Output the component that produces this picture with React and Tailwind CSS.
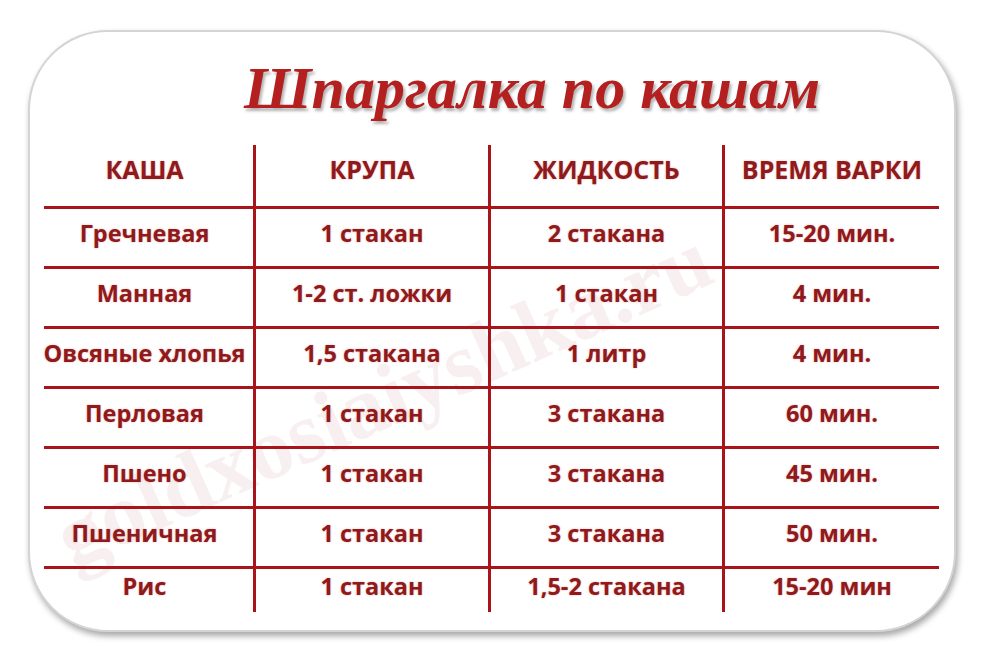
import React from 'react';

const rows = [
  ['Гречневая', '1 стакан', '2 стакана', '15-20 мин.'],
  ['Манная', '1-2 ст. ложки', '1 стакан', '4 мин.'],
  ['Овсяные хлопья', '1,5 стакана', '1 литр', '4 мин.'],
  ['Перловая', '1 стакан', '3 стакана', '60 мин.'],
  ['Пшено', '1 стакан', '3 стакана', '45 мин.'],
  ['Пшеничная', '1 стакан', '3 стакана', '50 мин.'],
  ['Рис', '1 стакан', '1,5-2 стакана', '15-20 мин'],
];

const headers = ['КАША', 'КРУПА', 'ЖИДКОСТЬ', 'ВРЕМЯ ВАРКИ'];
const widths = ['w-[212px]', 'w-[235px]', 'w-[234px]', 'w-[214px]'];

const Cell = ({ i, children, head }) => (
  <div
    className={`${widths[i]} shrink-0 flex items-center justify-center whitespace-nowrap ${
      i < 3 ? 'border-r-[3px] border-[#a8141a]' : ''
    } ${i === 0 ? 'pr-[8px]' : ''} ${head ? 'text-[25px] pb-[12px]' : 'text-[23.5px] pb-[8px]'}`}
  >
    <span className="[text-shadow:0_0_2px_rgba(220,60,60,0.45)]">{children}</span>
  </div>
);

export default function App() {
  return (
    <div className="w-[1000px] h-[650px] bg-white relative overflow-hidden">
      <div className="absolute left-[28px] top-[30px] w-[928px] h-[602px] rounded-[80px] border-2 border-[#d4d4d4] bg-white shadow-[2px_4px_6px_rgba(0,0,0,0.35)] overflow-hidden">
        {/* watermark */}
        <div className="absolute left-[0px] top-[300px] -rotate-[24deg] text-[88px] font-bold text-[#f8f0f0] whitespace-nowrap font-['Liberation_Serif',serif] select-none">
          goldxosiaiyshka.ru
        </div>

        <div className="relative flex flex-col">
          <h1 className="mt-[22px] ml-[214px] text-[60px] leading-[68px] font-bold italic text-[#b3201f] font-['Liberation_Serif',serif] [text-shadow:2px_3px_3px_rgba(0,0,0,0.3)] whitespace-nowrap">
            Шпаргалка по кашам
          </h1>

          <div className="mt-[23px] ml-[14px] flex flex-col font-['Open_Sans',sans-serif] font-bold text-[#8e1a1c]">
            <div className="flex h-[64px] border-b-[3px] border-[#a8141a] w-[895px]">
              {headers.map((h, i) => (
                <Cell key={i} i={i} head>
                  {h}
                </Cell>
              ))}
            </div>
            {rows.map((r, ri) => (
              <div
                key={ri}
                className={`flex w-[895px] ${
                  ri < rows.length - 1
                    ? 'h-[60px] border-b-[3px] border-[#a8141a]'
                    : 'h-[40px] items-start'
                }`}
              >
                {r.map((c, i) => (
                  <Cell key={i} i={i}>
                    {c}
                  </Cell>
                ))}
              </div>
            ))}
          </div>
        </div>
      </div>
    </div>
  );
}
